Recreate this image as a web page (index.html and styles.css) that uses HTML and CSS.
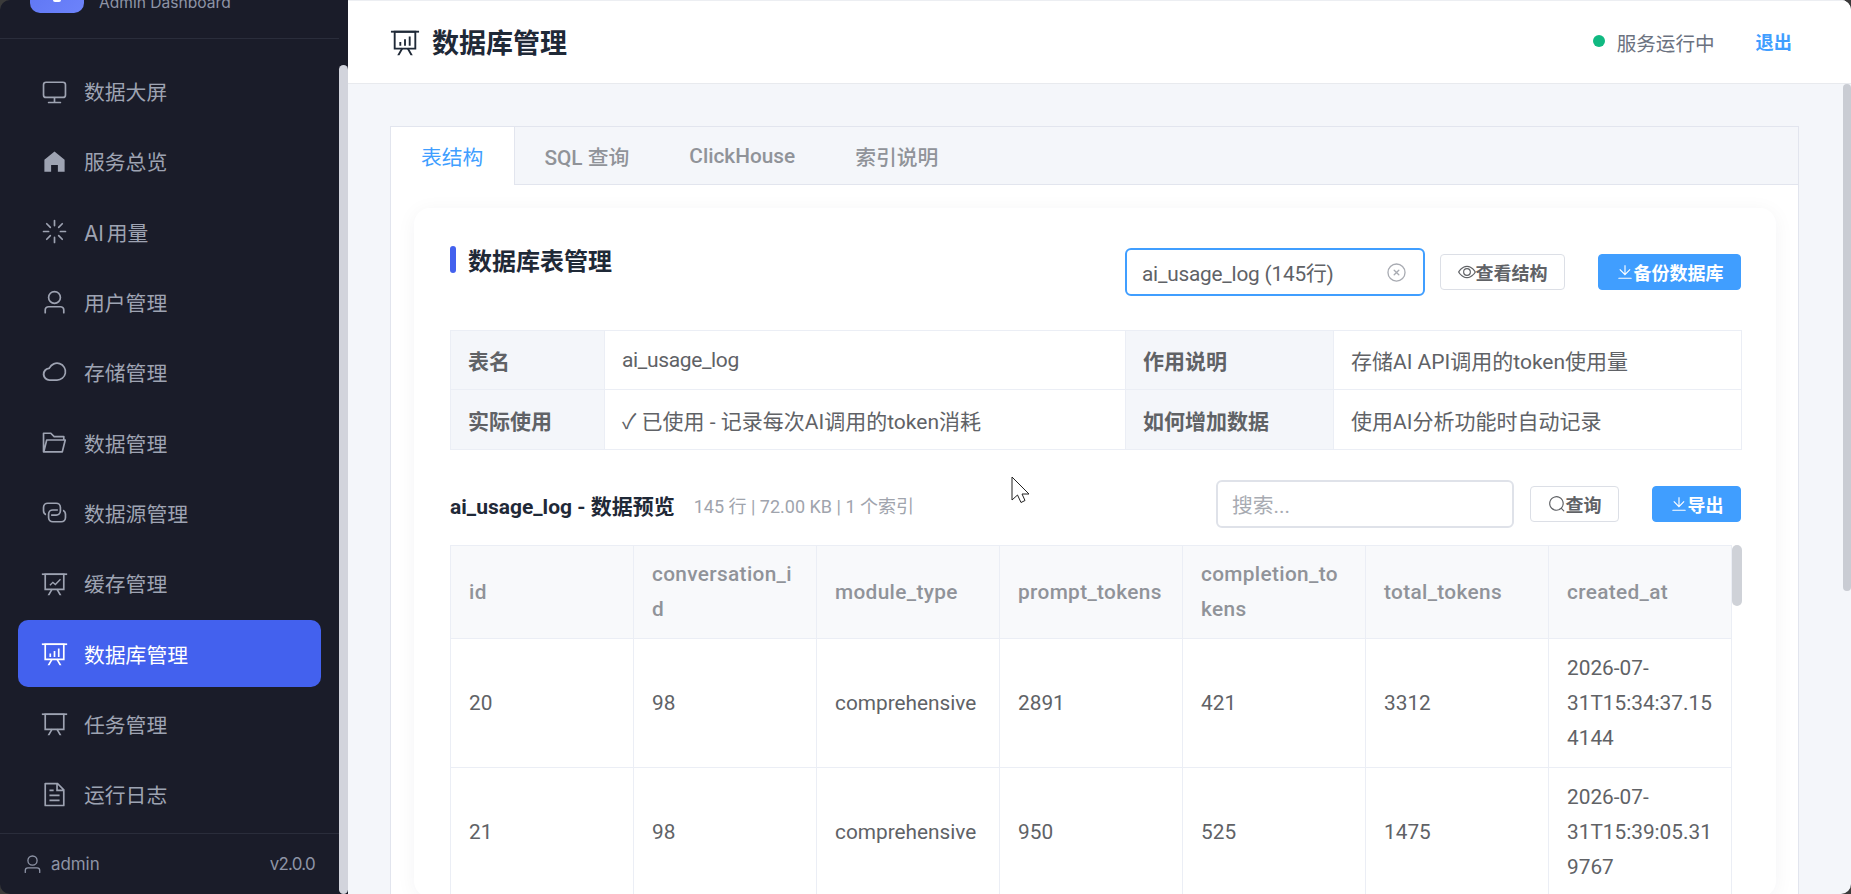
FILE: index.html
```html
<!DOCTYPE html>
<html lang="zh-CN">
<head>
<meta charset="utf-8">
<title>数据库管理</title>
<link rel="stylesheet" href="styles.css">
</head>
<body>
<svg class="defs" width="0" height="0" aria-hidden="true">
  <symbol id="i-monitor" viewBox="0 0 1024 1024"><path d="M544 768v128h192a32 32 0 1 1 0 64H288a32 32 0 1 1 0-64h192V768H192A128 128 0 0 1 64 640V256a128 128 0 0 1 128-128h640a128 128 0 0 1 128 128v384a128 128 0 0 1-128 128H544zM192 192a64 64 0 0 0-64 64v384a64 64 0 0 0 64 64h640a64 64 0 0 0 64-64V256a64 64 0 0 0-64-64H192z"/></symbol>
  <symbol id="i-home" viewBox="0 0 1024 1024"><path d="M512 128 128 447.936V896h255.936V640H640v256h255.936V447.936z"/></symbol>
  <symbol id="i-loading" viewBox="0 0 1024 1024"><path d="M512 64a32 32 0 0 1 32 32v192a32 32 0 0 1-64 0V96a32 32 0 0 1 32-32zm0 640a32 32 0 0 1 32 32v192a32 32 0 1 1-64 0V736a32 32 0 0 1 32-32zm448-192a32 32 0 0 1-32 32H736a32 32 0 1 1 0-64h192a32 32 0 0 1 32 32zm-640 0a32 32 0 0 1-32 32H96a32 32 0 0 1 0-64h192a32 32 0 0 1 32 32zM195.2 195.2a32 32 0 0 1 45.248 0L376.32 331.008a32 32 0 0 1-45.248 45.248L195.2 240.448a32 32 0 0 1 0-45.248zm452.544 452.544a32 32 0 0 1 45.248 0L828.8 783.552a32 32 0 0 1-45.248 45.248L647.744 692.992a32 32 0 0 1 0-45.248zM828.8 195.264a32 32 0 0 1 0 45.184L692.992 376.32a32 32 0 0 1-45.248-45.248l135.808-135.808a32 32 0 0 1 45.248 0zm-452.544 452.48a32 32 0 0 1 0 45.248L240.448 828.8a32 32 0 0 1-45.248-45.248l135.808-135.808a32 32 0 0 1 45.248 0z"/></symbol>
  <symbol id="i-user" viewBox="0 0 1024 1024"><path d="M512 512a192 192 0 1 0 0-384 192 192 0 0 0 0 384zm0 64a256 256 0 1 1 0-512 256 256 0 0 1 0 512zm320 320v-96a96 96 0 0 0-96-96H288a96 96 0 0 0-96 96v96a32 32 0 1 1-64 0v-96a160 160 0 0 1 160-160h448a160 160 0 0 1 160 160v96a32 32 0 1 1-64 0z"/></symbol>
  <symbol id="i-cloud" viewBox="0 0 1024 1024"><path d="M598.4 831.872H328.192a256 256 0 0 1-34.496-510.528A352 352 0 1 1 598.4 831.872zm-271.36-64h272.256a288 288 0 1 0-248.512-417.664L335.04 381.44 304 385.472a192 192 0 0 0 23.04 382.4z"/></symbol>
  <symbol id="i-folder" viewBox="0 0 1024 1024"><path d="M878.08 448H241.92l-96 384h636.16l96-384zM832 384v-64H485.76L357.504 192H128v448l57.92-231.744A32 32 0 0 1 216.96 384H832zm-24.96 512H96a32 32 0 0 1-32-32V160a32 32 0 0 1 32-32h287.872l128.384 128H864a32 32 0 0 1 32 32v96h23.04a32 32 0 0 1 31.04 39.744l-112 448A32 32 0 0 1 807.04 896z"/></symbol>
  <symbol id="i-connection" viewBox="0 0 1024 1024"><path d="M640 384v64H448a128 128 0 0 0-128 128v128a128 128 0 0 0 128 128h320a128 128 0 0 0 128-128V576a128 128 0 0 0-64-110.848V394.88c74.56 26.368 128 97.472 128 181.056v128a192 192 0 0 1-192 192H448a192 192 0 0 1-192-192V576a192 192 0 0 1 192-192h192z"/><path d="M384 640v-64h192a128 128 0 0 0 128-128V320a128 128 0 0 0-128-128H256a128 128 0 0 0-128 128v128a128 128 0 0 0 64 110.848v70.272A192.064 192.064 0 0 1 64 448V320a192 192 0 0 1 192-192h320a192 192 0 0 1 192 192v128a192 192 0 0 1-192 192H384z"/></symbol>
  <symbol id="i-board" viewBox="0 0 1024 1024"><path d="M32 128h960v64H32z"/><path d="M192 192v512h640V192H192zm-64-64h768v640H128V128z"/><path d="M322.176 960H248.32l144.64-250.56 55.424 32L322.176 960zm453.888 0h-73.856L576 741.44l55.424-32L776.064 960z"/></symbol>
  <symbol id="i-dataline" viewBox="0 0 1024 1024"><path d="M32 128h960v64H32z"/><path d="M192 192v512h640V192H192zm-64-64h768v640H128V128z"/><path d="M322.176 960H248.32l144.64-250.56 55.424 32L322.176 960zm453.888 0h-73.856L576 741.44l55.424-32L776.064 960z"/><path d="M320 560l128-128 96 80 176-176 38 38-212 212-96-80-92 92z"/></symbol>
  <symbol id="i-bars" viewBox="0 0 1024 1024"><path d="M32 128h960v64H32z"/><path d="M192 192v512h640V192H192zm-64-64h768v640H128V128z"/><path d="M322.176 960H248.32l144.64-250.56 55.424 32L322.176 960zm453.888 0h-73.856L576 741.44l55.424-32L776.064 960z"/><path d="M320 512h64v128h-64zM480 416h64v224h-64zM640 320h64v320h-64z"/></symbol>
  <symbol id="i-doc" viewBox="0 0 1024 1024"><path d="M832 384H576V128H192v768h640V384zm-26.496-64L640 154.496V320h165.504zM160 64h480l256 256v608a32 32 0 0 1-32 32H160a32 32 0 0 1-32-32V96a32 32 0 0 1 32-32zm160 448h384v64H320v-64zm0-192h160v64H320v-64zm0 384h384v64H320v-64z"/></symbol>
  <symbol id="i-view" viewBox="0 0 1024 1024"><path d="M512 160c320 0 512 352 512 352S832 864 512 864 0 512 0 512s192-352 512-352zm0 64c-225.28 0-384.128 208.064-436.8 288 52.608 79.872 211.456 288 436.8 288 225.28 0 384.128-208.064 436.8-288-52.608-79.872-211.456-288-436.8-288zm0 64a224 224 0 1 1 0 448 224 224 0 0 1 0-448zm0 64a160.192 160.192 0 0 0-160 160c0 88.192 71.744 160 160 160s160-71.808 160-160-71.744-160-160-160z"/></symbol>
  <symbol id="i-download" viewBox="0 0 1024 1024"><path d="M160 832h704a32 32 0 1 1 0 64H160a32 32 0 1 1 0-64zm384-253.696 236.288-236.352 45.248 45.248L508.8 704 192 387.2l45.248-45.248L480 584.704V128h64v450.304z"/></symbol>
  <symbol id="i-search" viewBox="0 0 1024 1024"><path d="m795.904 750.72 124.992 124.928a32 32 0 0 1-45.248 45.248L750.656 795.904a416 416 0 1 1 45.248-45.248zM480 832a352 352 0 1 0 0-704 352 352 0 0 0 0 704z"/></symbol>
  <symbol id="i-close" viewBox="0 0 1024 1024"><path d="m466.752 512-90.496-90.496a32 32 0 0 1 45.248-45.248L512 466.752l90.496-90.496a32 32 0 1 1 45.248 45.248L557.248 512l90.496 90.496a32 32 0 1 1-45.248 45.248L512 557.248l-90.496 90.496a32 32 0 0 1-45.248-45.248L466.752 512z"/><path d="M512 896a384 384 0 1 0 0-768 384 384 0 0 0 0 768zm0 64a448 448 0 1 1 0-896 448 448 0 0 1 0 896z"/></symbol>
</svg>

<div class="shell">
  <aside class="sidebar">
    <div class="side-body">
      <div class="brand">
        <div class="logo"><span class="logo-mark"></span></div>
        <div class="brand-sub">Admin Dashboard</div>
      </div>
      <nav class="nav">
        <a class="nav-item"><svg class="nav-icon"><use href="#i-monitor"/></svg><span>数据大屏</span></a>
        <a class="nav-item"><svg class="nav-icon"><use href="#i-home"/></svg><span>服务总览</span></a>
        <a class="nav-item"><svg class="nav-icon"><use href="#i-loading"/></svg><span>AI 用量</span></a>
        <a class="nav-item"><svg class="nav-icon"><use href="#i-user"/></svg><span>用户管理</span></a>
        <a class="nav-item"><svg class="nav-icon"><use href="#i-cloud"/></svg><span>存储管理</span></a>
        <a class="nav-item"><svg class="nav-icon"><use href="#i-folder"/></svg><span>数据管理</span></a>
        <a class="nav-item"><svg class="nav-icon"><use href="#i-connection"/></svg><span>数据源管理</span></a>
        <a class="nav-item"><svg class="nav-icon"><use href="#i-dataline"/></svg><span>缓存管理</span></a>
        <a class="nav-item active"><svg class="nav-icon"><use href="#i-bars"/></svg><span>数据库管理</span></a>
        <a class="nav-item"><svg class="nav-icon"><use href="#i-board"/></svg><span>任务管理</span></a>
        <a class="nav-item"><svg class="nav-icon"><use href="#i-doc"/></svg><span>运行日志</span></a>
      </nav>
      <div class="side-foot">
        <div class="side-user"><svg class="foot-icon"><use href="#i-user"/></svg><span>admin</span></div>
        <span class="version">v2.0.0</span>
      </div>
    </div>
    <div class="side-scroll"><div class="side-thumb"></div></div>
  </aside>

  <main class="main">
    <header class="topbar">
      <div class="page-title"><svg class="title-icon"><use href="#i-bars"/></svg><h1>数据库管理</h1></div>
      <div class="top-right">
        <span class="dot"></span><span class="status">服务运行中</span>
        <a class="logout">退出</a>
      </div>
    </header>

    <div class="scroll-area">
      <div class="content">
        <div class="tabs">
          <div class="tab-head">
            <div class="tab active">表结构</div>
            <div class="tab">SQL 查询</div>
            <div class="tab">ClickHouse</div>
            <div class="tab">索引说明</div>
          </div>
          <div class="tab-body">
            <section class="card">
              <div class="card-head">
                <h2 class="card-title"><span>数据库表管理</span></h2>
                <div class="card-tools">
                  <div class="select"><span>ai_usage_log (145行)</span><svg class="select-x"><use href="#i-close"/></svg></div>
                  <button class="btn btn-view"><svg class="btn-icon"><use href="#i-view"/></svg>查看结构</button>
                  <button class="btn primary btn-backup"><svg class="btn-icon"><use href="#i-download"/></svg>备份数据库</button>
                </div>
              </div>

              <table class="info">
                <colgroup><col class="c1"><col class="c2"><col class="c3"><col class="c4"></colgroup>
                <tr class="r1"><th>表名</th><td class="latin-cell">ai_usage_log</td><th>作用说明</th><td>存储AI API调用的token使用量</td></tr>
                <tr class="r2"><th>实际使用</th><td>✓ 已使用 - 记录每次AI调用的token消耗</td><th>如何增加数据</th><td>使用AI分析功能时自动记录</td></tr>
              </table>

              <div class="preview-head">
                <div class="preview-title"><strong>ai_usage_log - 数据预览</strong><span class="preview-meta">145 行 | 72.00 KB | 1 个索引</span></div>
                <div class="preview-tools">
                  <div class="search-box">搜索...</div>
                  <button class="btn btn-query"><svg class="btn-icon"><use href="#i-search"/></svg>查询</button>
                  <button class="btn primary btn-export"><svg class="btn-icon"><use href="#i-download"/></svg>导出</button>
                </div>
              </div>

              <div class="grid-wrap">
                <table class="grid">
                  <thead><tr><th>id</th><th>conversation_id</th><th>module_type</th><th>prompt_tokens</th><th>completion_tokens</th><th>total_tokens</th><th>created_at</th></tr></thead>
                  <tbody>
                    <tr><td>20</td><td>98</td><td>comprehensive</td><td>2891</td><td>421</td><td>3312</td><td>2026-07-31T15:34:37.154144</td></tr>
                    <tr><td>21</td><td>98</td><td>comprehensive</td><td>950</td><td>525</td><td>1475</td><td>2026-07-31T15:39:05.319767</td></tr>
                  </tbody>
                </table>
                <div class="grid-scroll"><div class="grid-thumb"></div></div>
              </div>
            </section>
          </div>
        </div>
      </div>
      <div class="main-scroll"><div class="main-thumb"></div></div>
    </div>
  </main>

  <svg class="cursor" width="20" height="28" viewBox="0 0 20 28"><path d="M1 1V24L6.5 19L10 26.500L14 24.500L11 18H18Z" fill="#fff" stroke="#222" stroke-width="1"/></svg>
</div>
</body>
</html>
```
FILE: styles.css
```css
* { box-sizing: border-box; }
html, body { margin: 0; height: 100%; }
body {
  background: #3a3a3a;
  overflow: hidden;
  font-family: "Roboto", "Noto Sans CJK SC", sans-serif;
  color: #606266;
}
.defs { position: absolute; }
svg { fill: currentColor; flex: none; }
h1, h2 { margin: 0; }

.shell {
  position: relative;
  display: flex;
  width: 1851px;
  height: 894px;
  border-radius: 10px;
  overflow: hidden;
}

/* sidebar */
.sidebar {
  width: 348px;
  flex: none;
  display: flex;
  background: #1a1c29;
  color: #9ea3b2;
  font-family: "Inter", "Noto Sans CJK SC", sans-serif;
}
.side-body { width: 339px; display: flex; flex-direction: column; }
.side-scroll { width: 9px; padding-top: 65px; }
.side-thumb { height: 100%; background: #d2d4dc; border-radius: 5px; }
.brand {
  height: 39px;
  flex: none;
  display: flex;
  overflow: hidden;
  gap: 15px;
  padding-left: 30px;
  border-bottom: 1px solid #2a2d3b;
}
.logo {
  width: 54px;
  height: 54px;
  margin-top: -41px;
  border-radius: 10px;
  background: linear-gradient(135deg, #5a72f0, #6d83fb);
  display: flex;
  justify-content: center;
  align-items: flex-end;
}
.logo-mark { width: 8px; height: 15px; background: #fff; margin-bottom: 11px; border-radius: 2px; }
.brand-sub { margin-top: -8px; font-size: 15.6px; line-height: 22px; color: #8e94a6; }
.nav { flex: 1; padding-top: 19px; display: flex; flex-direction: column; gap: 4px; }
.nav-item {
  height: 66.3px;
  flex: none;
  margin: 0 18px;
  padding-left: 23px;
  display: flex;
  align-items: center;
  gap: 16px;
  border-radius: 10px;
  font-size: 20.8px;
  word-spacing: -3px;
}
.nav-item.active { background: #4361ee; color: #fff; }
.nav-icon { width: 27px; height: 27px; }
.side-foot {
  height: 61px;
  flex: none;
  border-top: 1px solid #2a2d3b;
  padding: 0 24px 0 22px;
  display: flex;
  align-items: center;
  justify-content: space-between;
  font-size: 16.9px;
  color: #8e94a6;
}
.side-user { display: flex; align-items: center; gap: 8px; }
.foot-icon { width: 21px; height: 21px; }
.version { letter-spacing: -0.7px; }

/* main */
.main { flex: 1; min-width: 0; display: flex; flex-direction: column; background: #f4f6fa; }
.topbar {
  height: 84px;
  flex: none;
  background: #fff;
  border-top: 1px solid #eceef2;
  border-bottom: 1px solid #e8eaee;
  padding: 0 59px 0 42px;
  display: flex;
  align-items: center;
  justify-content: space-between;
}
.page-title { display: flex; align-items: center; gap: 12px; color: #1f2937; }
.title-icon { width: 30px; height: 30px; }
.page-title h1 { font-size: 27px; font-weight: 700; line-height: 36px; margin-top: 4px; }
.top-right { display: flex; align-items: center; font-size: 18.2px; margin-top: 0; }
.dot { width: 12px; height: 12px; border-radius: 50%; background: #10b981; margin-right: 12px; margin-left: -1px; margin-top: -2px; }
.status { color: #6b7280; margin-right: 41px; font-size: 19.6px; margin-top: 1px; }
.logout { color: #409eff; font-size: 18.2px; font-weight: 700; margin-top: -2px; }

.scroll-area { flex: 1; min-height: 0; display: flex; overflow: hidden; }
.content { flex: 1; min-width: 0; padding: 42px 44px 0 42px; }
.main-scroll { width: 8px; flex: none; }
.main-thumb { height: 507px; background: #c9ccd3; border-radius: 4px; }

/* tabs */
.tabs { border: 1px solid #e2e5ee; background: #fff; }
.tab-head { display: flex; height: 58px; background: #f4f6fa; border-bottom: 1px solid #e2e5ee; }
.tab {
  height: 58px;
  padding: 0 30px;
  display: flex;
  align-items: center;
  font-size: 20.8px;
  color: #909399;
  font-weight: 500;
}
.tab.active { background: #fff; color: #409eff; border-right: 1px solid #e2e5ee; font-weight: 400; padding-right: 31px; margin-right: -1px; }
.tab-body { padding: 23px 22px 0 23px; }

.card {
  background: #fff;
  border-radius: 16px;
  padding: 38px 35px 0 36px;
  box-shadow: 0 3px 20px rgba(20, 30, 60, 0.05);
}
.card-head { display: flex; justify-content: space-between; align-items: flex-start; height: 50px; margin-bottom: 34px; }
.card-title {
  display: flex;
  gap: 12px;
  font-size: 24px;
  font-weight: 700;
  line-height: 27px;
  color: #1f2937;
}
.card-title::before { content: ""; width: 6px; height: 27px; background: #4361ee; border-radius: 3px; }
.card-title span { margin-top: 3px; }
.card-tools { display: flex; align-items: center; margin-top: 2px; }
.select {
  width: 300px;
  height: 48px;
  border: 2px solid #409eff;
  border-radius: 6px;
  display: flex;
  align-items: center;
  justify-content: space-between;
  padding: 0 16px 0 15px;
  font-size: 20.8px;
  color: #606266;
}
.select span { letter-spacing: -0.2px; }
.select-x { width: 21px; height: 21px; color: #a8abb2; }
.btn {
  height: 36px;
  border: 1px solid #dcdfe6;
  background: #fff;
  border-radius: 4px;
  color: #606266;
  font-family: inherit;
  font-size: 18px;
  font-weight: 600;
  padding: 0;
  display: flex;
  align-items: center;
  justify-content: center;
}
.btn.primary { background: #409eff; border-color: #409eff; color: #fff; }
.btn-icon { width: 18px; height: 18px; }
.btn-view { width: 125px; margin-left: 15px; }
.btn-backup { width: 143px; margin-left: 33px; }

/* info table */
table { border-collapse: collapse; table-layout: fixed; }
.info { width: 1291px; font-size: 21px; }
.c1 { width: 154px; }
.c2 { width: 521px; }
.c3 { width: 208px; }
.c4 { width: 408px; }
.info th, .info td { border: 1px solid #ebeef5; padding: 0 17px; text-align: left; }
.info th { background: #f4f6fa; font-weight: 700; color: #606266; }
.info td { color: #606266; }
.info td.latin-cell { letter-spacing: -0.35px; }
.r1 { height: 59px; }
.r2 { height: 60px; }

/* preview */
.preview-head { display: flex; justify-content: space-between; align-items: center; height: 48px; margin-top: 30px; margin-bottom: 17px; }
.preview-title { display: flex; align-items: center; gap: 19px; margin-top: 2px; }
.preview-title strong { font-size: 21px; font-weight: 700; color: #1f2937; }
.preview-meta { font-size: 18px; color: #a0a4ad; }
.preview-tools { display: flex; align-items: center; }
.search-box {
  width: 298px;
  height: 48px;
  border: 2px solid #dfe2e9;
  border-radius: 6px;
  padding: 0 14px;
  display: flex;
  align-items: center;
  font-size: 20.8px;
  color: #a8abb2;
}
.btn-query { width: 89px; margin-left: 16px; }
.btn-export { width: 89px; margin-left: 33px; }

/* data grid */
.grid-wrap { display: flex; }
.grid { width: 1281px; font-size: 20.8px; line-height: 35px; }
.grid th, .grid td {
  width: 183px;
  border: 1px solid #ebeef5;
  padding: 0 18px;
  text-align: left;
  overflow-wrap: anywhere;
}
.grid th { height: 93px; background: #f8f9fb; color: #909399; font-weight: 500; letter-spacing: 0.35px; }
.grid td { height: 129px; color: #606266; }
.grid-scroll { width: 10px; flex: none; }
.grid-thumb { height: 61px; background: #cfd2d8; border-radius: 5px; }

.cursor { position: absolute; left: 1011px; top: 476px; }
```
